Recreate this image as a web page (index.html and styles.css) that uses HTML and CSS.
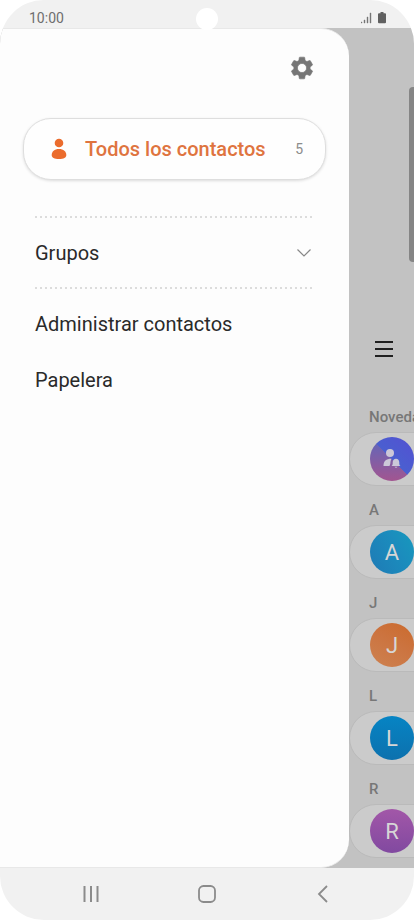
FILE: index.html
```html
<!DOCTYPE html>
<html lang="es">
<head>
<meta charset="utf-8">
<meta name="viewport" content="width=device-width, initial-scale=1">
<title>Contactos</title>
<link rel="stylesheet" href="styles.css">
</head>
<body>
<div class="phone">
  <header class="status">
    <time>10:00</time>
    <span class="camera"></span>
    <span class="status-icons">
      <svg width="11" height="12" viewBox="0 0 11 12" fill="#777"><path d="M0 10h1v1H0zM3 8h1v3H3zM6 5h1v6H6zM9 1h1v10H9z" stroke="#777" stroke-width=".4"/></svg>
      <svg width="8" height="12" viewBox="0 0 8 12" fill="#606060"><path d="M2.500 0h3v1.300H7q1 0 1 1v8q0 1-1 1H1q-1 0-1-1v-8q0-1 1-1h1.500z"/></svg>
    </span>
  </header>

  <main class="screen">
    <aside class="drawer">
      <div class="drawer-top">
        <button class="icon-button" type="button" aria-label="Ajustes">
          <svg width="26" height="26" viewBox="0 0 24 24" fill="#767676" stroke="#767676" stroke-width=".6" stroke-linejoin="round"><path d="M19.430 12.980c.04-.32.07-.64.07-.98s-.03-.66-.07-.98l2.110-1.650c.19-.15.24-.42.12-.64l-2-3.460c-.12-.22-.39-.3-.61-.22l-2.490 1c-.52-.4-1.080-.73-1.690-.98l-.38-2.650A.49.49 0 0 0 14 2h-4c-.25 0-.46.18-.49.42l-.38 2.650c-.61.25-1.170.59-1.690.98l-2.490-1c-.23-.09-.49 0-.61.22l-2 3.460c-.13.22-.07.49.12.64l2.110 1.650c-.04.32-.07.65-.07.98s.03.66.07.98l-2.110 1.650c-.19.15-.24.42-.12.64l2 3.460c.12.22.39.3.61.22l2.490-1c.52.4 1.080.73 1.690.98l.38 2.650c.03.24.24.42.49.42h4c.25 0 .46-.18.49-.42l.38-2.650c.61-.25 1.170-.59 1.690-.98l2.490 1c.23.09.49 0 .61-.22l2-3.460c.12-.22.07-.49-.12-.64zM12 16.200a4.200 4.200 0 1 1 0-8.400 4.200 4.200 0 0 1 0 8.400z"/></svg>
        </button>
      </div>
      <a class="account" href="#todos">
        <svg width="16" height="22" viewBox="0 0 16 22" fill="#eb6c2d"><circle cx="8" cy="5" r="4.300"/><path d="M8 11c4.500 0 7.300 2.600 7.300 6 0 2.600-2.600 4-7.300 4s-7.300-1.400-7.300-4c0-3.400 2.800-6 7.300-6z"/></svg>
        <span class="account-name">Todos los contactos</span>
        <span class="count">5</span>
      </a>
      <nav class="menu">
        <hr>
        <button class="menu-item groups" type="button">Grupos
          <svg width="16" height="10" viewBox="0 0 16 10" fill="none" stroke="#888" stroke-width="1.200"><path d="M1.500 1.500 8 8l6.500-6.500"/></svg>
        </button>
        <hr>
        <a class="menu-item first-link" href="#administrar">Administrar contactos</a>
        <a class="menu-item" href="#papelera">Papelera</a>
      </nav>
    </aside>

    <section class="contacts">
      <span class="scrollbar"></span>
      <button class="icon-button hamburger" type="button" aria-label="Menú">
        <svg width="18" height="18" viewBox="0 0 18 18" stroke="#202020" stroke-width="1.800"><path d="M0 2h18M0 9h18M0 16h18"/></svg>
      </button>
      <h2>Novedades</h2>
      <div class="card"><span class="avatar news">
        <svg width="44" height="44" viewBox="0 0 44 44" fill="#ccc8d8"><circle cx="20" cy="16" r="4"/><path d="M13.500 29c0-5 2.500-7.300 8-7.300-1 1.500-1 3.500-1.200 5L19.500 29zM21.500 29c1.400-1.200 1.200-2.200 1.200-3.500 0-2 1.300-3.700 3.300-3.700s3.300 1.700 3.300 3.700c0 1.300-.2 2.300 1.200 3.500zM24.500 29.800h3q-1.500 2-3 0z"/></svg>
      </span></div>
      <h2>A</h2>
      <div class="card"><span class="avatar blue">A</span></div>
      <h2>J</h2>
      <div class="card"><span class="avatar orange">J</span></div>
      <h2>L</h2>
      <div class="card"><span class="avatar deep">L</span></div>
      <h2>R</h2>
      <div class="card"><span class="avatar purple">R</span></div>
    </section>
  </main>

  <footer class="navbar">
    <button class="icon-button" type="button" aria-label="Recientes">
      <svg width="18" height="18" viewBox="0 0 18 18" stroke="#8b8b8b" stroke-width="2"><path d="M2.500 1v16M9 1v16M15.500 1v16"/></svg>
    </button>
    <button class="icon-button" type="button" aria-label="Inicio">
      <svg width="18" height="18" viewBox="0 0 18 18" fill="none" stroke="#8b8b8b" stroke-width="1.800"><rect x="1" y="1" width="16" height="16" rx="4.500"/></svg>
    </button>
    <button class="icon-button" type="button" aria-label="Atrás">
      <svg width="18" height="18" viewBox="0 0 18 18" fill="none" stroke="#8b8b8b" stroke-width="1.800"><path d="M13 1 5 9l8 8"/></svg>
    </button>
  </footer>
</div>
</body>
</html>
```
FILE: styles.css
```css
* {
  box-sizing: border-box;
}

body {
  margin: 0;
  background: #fff;
  color: #2a2a2a;
  font-family: Roboto, "Liberation Sans", sans-serif;
}

svg {
  display: block;
  flex: none;
}

button {
  border: 0;
  padding: 0;
  background: none;
  color: inherit;
  font: inherit;
}

a {
  color: inherit;
  text-decoration: none;
}

.phone {
  display: flex;
  flex-direction: column;
  min-height: 100vh;
  border-radius: 44px;
  overflow: hidden;
  background: #f1f1f1;
}

.status {
  position: relative;
  display: flex;
  justify-content: space-between;
  align-items: center;
  height: 28px;
  padding: 8px 28px 0 29px;
  color: #6e6e6e;
  font-size: 14px;
  line-height: 20px;
}

.status-icons {
  display: flex;
  align-items: center;
  gap: 6px;
}

.camera {
  position: absolute;
  z-index: 1;
  top: 8px;
  left: calc(50% - 11px);
  width: 22px;
  height: 22px;
  border-radius: 50%;
  background: #fff;
}

.screen {
  display: flex;
  flex: 1;
  background: #c2c2c2;
}

.drawer {
  flex: 1;
  padding: 0 23px;
  border-top: 1px solid #e8e8e8;
  border-bottom: 1px solid #e8e8e8;
  border-radius: 0 28px 28px 0;
  background: #fdfdfd;
}

.drawer-top {
  display: flex;
  justify-content: flex-end;
  padding: 26px 11px 37px;
}

.icon-button {
  display: flex;
  justify-content: center;
  align-items: center;
}

.account {
  display: flex;
  align-items: center;
  height: 62px;
  padding: 0 22px 0 27px;
  border: 1px solid #dedede;
  border-radius: 28px;
  background: #fefefe;
  box-shadow: 0 1px 3px #0002;
}

.account-name {
  flex: 1;
  margin-left: 18px;
  color: #df743f;
  font-size: 20px;
  font-weight: 500;
}

.count {
  color: #8c8c8c;
  font-size: 14px;
}

.menu {
  display: flex;
  flex-direction: column;
  padding: 36px 12px 0;
}

hr {
  width: 100%;
  height: 2px;
  margin: 0;
  border: 0;
  background: repeating-linear-gradient(90deg, #dcdcdc 0 2px, transparent 2px 5px);
}

.menu-item {
  display: flex;
  justify-content: space-between;
  align-items: center;
  height: 56px;
  font-size: 20px;
}

.groups {
  height: 69px;
  padding-right: 2px;
}

.first-link {
  margin-top: 7px;
}

.contacts {
  position: relative;
  width: 65px;
  padding: 309px 0 10px;
  overflow: hidden;
}

.scrollbar {
  position: absolute;
  top: 59px;
  right: 0;
  width: 5px;
  height: 175px;
  border-radius: 4px 0 0 4px;
  background: #858585;
}

.hamburger {
  width: 70px;
  height: 24px;
  margin-bottom: 32px;
}

h2 {
  height: 39px;
  margin: 0;
  padding: 9px 0 0 20px;
  color: #777;
  font-size: 15px;
  font-weight: 500;
  line-height: 30px;
}

.card {
  display: flex;
  align-items: center;
  width: 300px;
  height: 54px;
  padding-left: 20px;
  border: 1px solid #bababa;
  border-radius: 27px;
  background: #cbcbcb;
}

.avatar {
  display: flex;
  justify-content: center;
  align-items: center;
  width: 44px;
  height: 44px;
  border-radius: 50%;
  color: #d6d6d6;
  font-size: 22px;
}

.news {
  background: linear-gradient(45deg, transparent 50%, #4a5fd0 50%, #5450d2), linear-gradient(#5c68bd, #a25590);
}

.blue {
  background: linear-gradient(60deg, #1f7ab5, #1b8cbd 60%, #1799bd);
}

.orange {
  background: linear-gradient(30deg, #cd8251, #cc7440 55%, #cb6a2c);
}

.deep {
  background: linear-gradient(#0684c4, #0d71ae);
}

.purple {
  background: linear-gradient(#a257a8, #8149a0);
}

.navbar {
  display: flex;
  justify-content: center;
  gap: 98px;
  height: 52px;
}
```
